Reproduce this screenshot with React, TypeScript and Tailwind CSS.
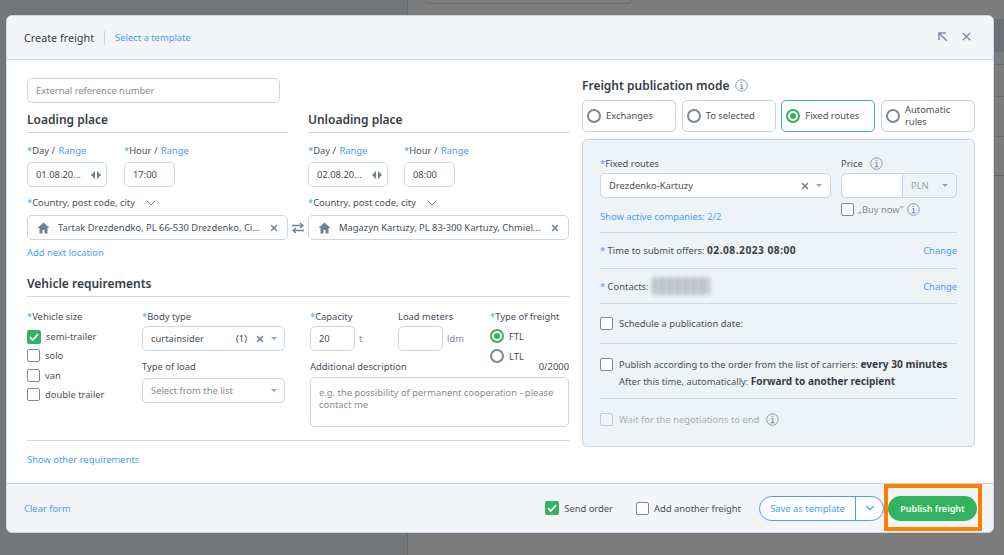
import { ChevronDown, X } from 'lucide-react';
import type { ReactNode } from 'react';

const Star = () => <span className="text-[#4a9cff]">*</span>;

function Info() {
  return (
    <svg width="13" height="13" viewBox="0 0 14 14" fill="none" className="shrink-0">
      <circle cx="7" cy="7" r="6.2" stroke="#7f97b8" strokeWidth="1" />
      <path d="M6 3.6h1.6M5.6 6.2h1.7v4M5.2 10.4h3.8" stroke="#6f86a8" strokeWidth="1.1" />
    </svg>
  );
}

function Check({ on, dim }: { on?: boolean; dim?: boolean }) {
  if (on) {
    return (
      <span className="flex h-[14px] w-[14px] shrink-0 items-center justify-center rounded-[2px] bg-[#33b25f]">
        <svg width="12" height="12" viewBox="0 0 12 12" fill="none">
          <path d="M2 6.2l2.8 2.8L10 3.2" stroke="#fff" strokeWidth="1.8" />
        </svg>
      </span>
    );
  }
  return <span className={`h-[13px] w-[13px] shrink-0 rounded-[2px] border ${dim ? 'border-[#c4cad3]' : 'border-[#7e8899] bg-white'}`} />;
}

function Radio({ on }: { on?: boolean }) {
  if (on) {
    return (
      <span className="flex h-[14px] w-[14px] shrink-0 items-center justify-center rounded-full border-[2px] border-[#33b25f] bg-white">
        <span className="h-[6px] w-[6px] rounded-full bg-[#33b25f]" />
      </span>
    );
  }
  return <span className="h-[14px] w-[14px] shrink-0 rounded-full border-[2px] border-[#7e8899] bg-white" />;
}

const Caret = () => <span className="h-0 w-0 border-x-[3.5px] border-t-[3.5px] border-x-transparent border-t-[#9aa3af]" />;

const Clear = () => <X size={10} strokeWidth={3.5} className="shrink-0 text-[#6f7f98]" />;

function Field({ className, children }: { className: string; children?: ReactNode }) {
  return <div className={`flex h-[25px] items-center rounded-[5px] border border-[#c7d6e8] bg-white ${className}`}>{children}</div>;
}

function Home() {
  return (
    <svg width="13" height="12" viewBox="0 0 13 12" className="shrink-0">
      <path d="M6.5 0.5L0.5 6h2v5.5h3V8h2v3.5h3V6h2z" fill="#6f7f98" />
    </svg>
  );
}

function PlaceColumn({ title, day, hour, place, narrow, children }: { title: string; day: string; hour: string; place: string; narrow?: boolean; children?: ReactNode }) {
  return (
    <div className="w-[261px]">
      <div className="h-[22px] border-b border-[#c7d6e8] text-[12px] leading-[17px] font-semibold text-[#373d45]">{title}</div>
      <div className="mt-[10px] flex">
        <div className={narrow ? 'w-[96px]' : 'w-[97px]'}>
          <div className="h-[15px]"><Star />Day / <span className="ml-px text-[#4a9cff]">Range</span></div>
          <Field className="mt-[4px] w-[80px] pl-[8px] pr-[5px]">
            <span className="flex-1">{day}</span>
            <span className="flex gap-[2px]">
              <span className="h-0 w-0 border-y-[4px] border-r-[4px] border-y-transparent border-r-[#6f7f98]" />
              <span className="h-0 w-0 border-y-[4px] border-l-[4px] border-y-transparent border-l-[#6f7f98]" />
            </span>
          </Field>
        </div>
        <div>
          <div className="h-[15px]"><Star />Hour / <span className="ml-px text-[#4a9cff]">Range</span></div>
          <Field className="mt-[4px] w-[51px] pl-[8px]">{hour}</Field>
        </div>
      </div>
      <div className="mt-[8px] flex h-[15px] items-center">
        <Star />Country, post code, city
        <ChevronDown size={16} strokeWidth={1.5} className="ml-[8px] text-[#5f86ad]" />
      </div>
      <Field className="mt-[5px] w-[261px] pl-[9px] pr-[8px]">
        <Home />
        <span className={narrow ? 'ml-[8px] w-[203px] truncate' : 'ml-[8px] w-[205px] truncate'}>{place}</span>
        <span className="ml-auto"><Clear /></span>
      </Field>
      {children}
    </div>
  );
}

function ModeButton({ label, on }: { label: ReactNode; on?: boolean }) {
  return (
    <div className={`flex h-[32px] w-[94px] items-center gap-[5px] rounded-[5px] border pl-[4px] leading-[12px] ${on ? 'border-[#4a9cff]' : 'border-[#cdd2d9]'}`}>
      <Radio on={on} />
      <span>{label}</span>
    </div>
  );
}

export default function App() {
  return (
    <div className="relative flex h-[555px] w-[1004px] overflow-hidden bg-[#7c7c7c] font-['Noto_Sans',sans-serif] text-[9.4px] leading-[15px] text-[#4a4f57]">
      <div className="h-full w-[408px] border-r border-[#686868] bg-[#727676]" />
      <div className="flex-1">
        <div className="ml-[17px] -mt-[20px] h-[24px] w-[207px] rounded-[5px] border border-[#6a6a6a]" />
        <div className="mt-[15px] h-[33px] bg-[#6c7276]" />
        <div className="h-[13px] border-b border-[#666a6c]" />
        <div className="h-[32px] border-b border-[#666a6c]" />
        <div className="h-[40px] border-b border-[#666a6c]" />
        <div className="h-[39px] border-b border-[#62696d]" />
      </div>

      <div className="absolute left-[6px] top-[15px] flex h-[518px] w-[988px] flex-col overflow-hidden rounded-[6px] border border-[#c7d6e8] bg-white">
        <div className="flex h-[44px] shrink-0 items-center border-b border-[#c7d6e8] bg-[#f3f5f8] pl-[17px] pr-[20px]">
          <span className="text-[10.8px] text-[#373d45]">Create freight</span>
          <span className="ml-[10px] h-[14px] w-px bg-[#c7d6e8]" />
          <span className="ml-[10px] text-[#4a9cff]">Select a template</span>
          <svg width="10" height="10" viewBox="0 0 10 10" fill="none" className="mb-[2px] ml-auto">
            <path d="M1 8V1h7M1 1l8 8" stroke="#7e8ea8" strokeWidth="1.6" />
          </svg>
          <X size={13} strokeWidth={2.6} className="mb-[2px] ml-[12px] text-[#7e8ea8]" />
        </div>

        <div className="flex flex-1 pl-[20px] pt-[18px]">
          <div className="w-[542px]">
            <Field className="w-[253px] pl-[8px] text-[#868c96]">External reference number</Field>
            <div className="mt-[8px] flex">
              <PlaceColumn title="Loading place" day="01.08.20..." hour="17:00" place="Tartak Drezdendko, PL 66-530 Drezdenko, Cieszkowa 1">
                <div className="mt-[5px] text-[#4a9cff]">Add next location</div>
              </PlaceColumn>
              <div className="w-[20px] pl-[4px] pt-[111px]">
                <svg width="12" height="12" viewBox="0 0 12 12" fill="none">
                  <path d="M0 3.5h11M8 1l3 2.5L8 6" stroke="#6f7f98" strokeWidth="1.4" />
                  <path d="M12 8.5H1M4 6L1 8.5 4 11" stroke="#6f7f98" strokeWidth="1.4" />
                </svg>
              </div>
              <PlaceColumn narrow title="Unloading place" day="02.08.20..." hour="08:00" place="Magazyn Kartuzy, PL 83-300 Kartuzy, Chmielińska 12" />
            </div>

            <div className="mt-[15px] h-[22px] border-b border-[#c7d6e8] text-[12px] leading-[17px] font-semibold text-[#373d45]">Vehicle requirements</div>
            <div className="mt-[12px] flex h-[119px]">
              <div className="w-[115px]">
                <div className="h-[15px]"><Star />Vehicle size</div>
                <div className="mt-[3px] flex h-[19px] items-center gap-[5px]"><Check on />semi-trailer</div>
                <div className="flex h-[19.5px] items-center gap-[5px]"><Check />solo</div>
                <div className="flex h-[19px] items-center gap-[5px]"><Check />van</div>
                <div className="flex h-[19px] items-center gap-[5px]"><Check />double trailer</div>
              </div>
              <div className="w-[168px]">
                <div className="h-[15px]"><Star />Body type</div>
                <Field className="mt-[2px] w-[143px] pl-[8px] pr-[7px]">
                  <span className="flex-1">curtainsider</span>
                  <span className="mr-[8px] text-[#373d60]">(1)</span>
                  <Clear />
                  <span className="ml-[6px] flex"><Caret /></span>
                </Field>
                <div className="mt-[8px] h-[15px]">Type of load</div>
                <Field className="mt-[4px] w-[143px] pl-[8px] pr-[7px] text-[#868c96]">
                  <span className="flex-1">Select from the list</span>
                  <Caret />
                </Field>
              </div>
              <div className="w-[259px]">
                <div className="flex">
                  <div className="w-[88px]">
                    <div className="h-[15px]"><Star />Capacity</div>
                    <div className="mt-[2px] flex items-center">
                      <Field className="w-[45px] pl-[8px]">20</Field>
                      <span className="ml-[4px] text-[#868c96]">t</span>
                    </div>
                  </div>
                  <div className="w-[92px]">
                    <div className="h-[15px]">Load meters</div>
                    <div className="mt-[2px] flex items-center">
                      <Field className="w-[45px]" />
                      <span className="ml-[4px] text-[#868c96]">ldm</span>
                    </div>
                  </div>
                  <div>
                    <div className="h-[15px]"><Star />Type of freight</div>
                    <div className="mt-[2px] flex h-[20px] items-center gap-[5px]"><Radio on />FTL</div>
                    <div className="flex h-[20px] items-center gap-[5px]"><Radio />LTL</div>
                  </div>
                </div>
                <div className="-mt-[7px] flex h-[15px] justify-between">
                  <span>Additional description</span>
                  <span>0/2000</span>
                </div>
                <div className="mt-[3px] h-[50px] rounded-[5px] border border-[#c7d6e8] pl-[8px] pr-[6px] pt-[9px] leading-[12px] text-[#868c96]">
                  e.g. the possibility of permanent cooperation - please contact me
                </div>
              </div>
            </div>
            <div className="mt-[12px] border-t border-[#c7d6e8] pt-[11px] text-[#4a9cff]">Show other requirements</div>
          </div>

          <div className="ml-[13px] w-[393px]">
            <div className="flex h-[14px] items-center gap-[6px] text-[12px] font-semibold text-[#373d45]">
              Freight publication mode <Info />
            </div>
            <div className="mt-[8px] flex justify-between">
              <ModeButton label="Exchanges" />
              <ModeButton label="To selected" />
              <ModeButton label="Fixed routes" on />
              <ModeButton label={<>Automatic<br />rules</>} />
            </div>
            <div className="mt-[7px] h-[308px] rounded-[5px] border border-[#c7d6e8] bg-[#eef3f7] px-[17px] pt-[16px]">
              <div className="flex">
                <div className="w-[241px]">
                  <div className="h-[15px]"><Star />Fixed routes</div>
                  <Field className="mt-[2px] w-[231px] pl-[8px] pr-[8px]">
                    <span className="flex-1">Drezdenko-Kartuzy</span>
                    <Clear />
                    <span className="ml-[6px] flex"><Caret /></span>
                  </Field>
                  <div className="mt-[11px] text-[#4a9cff]">Show active companies: 2/2</div>
                </div>
                <div>
                  <div className="flex h-[15px] items-center gap-[7px]">Price <Info /></div>
                  <div className="mt-[2px] flex h-[25px] w-[116px] rounded-[5px] border border-[#c7d6e8]">
                    <div className="w-[60px] rounded-l-[5px] bg-white" />
                    <div className="flex flex-1 items-center justify-between border-l border-[#c7d6e8] pl-[8px] pr-[8px] text-[#9aa3af]">PLN <Caret /></div>
                  </div>
                  <div className="mt-[4px] flex items-center gap-[4px] text-[#868c96]"><Check />„Buy now” <Info /></div>
                </div>
              </div>
              <div className="mt-[8px] flex h-[37px] items-center justify-between border-y border-[#c7d6e8]">
                <span><Star /> Time to submit offers: <b className="text-[10.2px] font-bold tracking-[0.5px] text-[#373d45]">02.08.2023 08:00</b></span>
                <span className="text-[#4a9cff]">Change</span>
              </div>
              <div className="flex h-[35px] items-center justify-between border-b border-[#c7d6e8]">
                <span className="flex items-center gap-[3px]"><span><Star /> Contacts:</span><span className="h-[18px] w-[58px] rounded-[3px] bg-[repeating-linear-gradient(90deg,#b4bac0_0_4px,#cdd2d6_4px_8px)] blur-[2px]" /></span>
                <span className="text-[#4a9cff]">Change</span>
              </div>
              <div className="flex h-[40px] items-center gap-[6px] border-b border-[#c7d6e8]"><Check />Schedule a publication date:</div>
              <div className="h-[55px] border-b border-[#c7d6e8] pt-[13px]">
                <div className="flex h-[15px] items-center gap-[6px]"><Check /><span>Publish according to the order from the list of carriers: <b className="text-[10.2px] font-bold text-[#373d45]">every 30 minutes</b></span></div>
                <div className="mt-[2px] pl-[19px]">After this time, automatically: <b className="text-[10px] font-bold text-[#373d45]">Forward to another recipient</b></div>
              </div>
              <div className="mt-[13px] flex items-center gap-[6px] text-[#a9aeb5]"><Check dim />Wait for the negotiations to end <span className="ml-[1px]"><Info /></span></div>
            </div>
          </div>
        </div>

        <div className="flex h-[49px] shrink-0 items-center border-t border-[#c7d6e8] bg-[#f3f5f8] pl-[17px] pr-[16px]">
          <span className="text-[#4a9cff]">Clear form</span>
          <div className="ml-auto flex items-center gap-[5px]"><Check on />Send order</div>
          <div className="ml-[23px] flex items-center gap-[5px]"><Check />Add another freight</div>
          <div className="ml-[18px] flex h-[25px] w-[125px] rounded-full border border-[#4a9cff] bg-white text-[#4a9cff]">
            <span className="flex w-[96px] items-center justify-center border-r border-[#4a9cff]">Save as template</span>
            <span className="flex flex-1 items-center justify-center"><ChevronDown size={14} strokeWidth={2} /></span>
          </div>
          <div className="ml-[4px] flex h-[25px] w-[89px] items-center justify-center rounded-full bg-[#33b25f] text-[9px] font-semibold text-white">Publish freight</div>
        </div>
      </div>

      <div className="absolute left-[884px] top-[484px] h-[47px] w-[98px] border-[4px] border-[#ff8000]" />
    </div>
  );
}
